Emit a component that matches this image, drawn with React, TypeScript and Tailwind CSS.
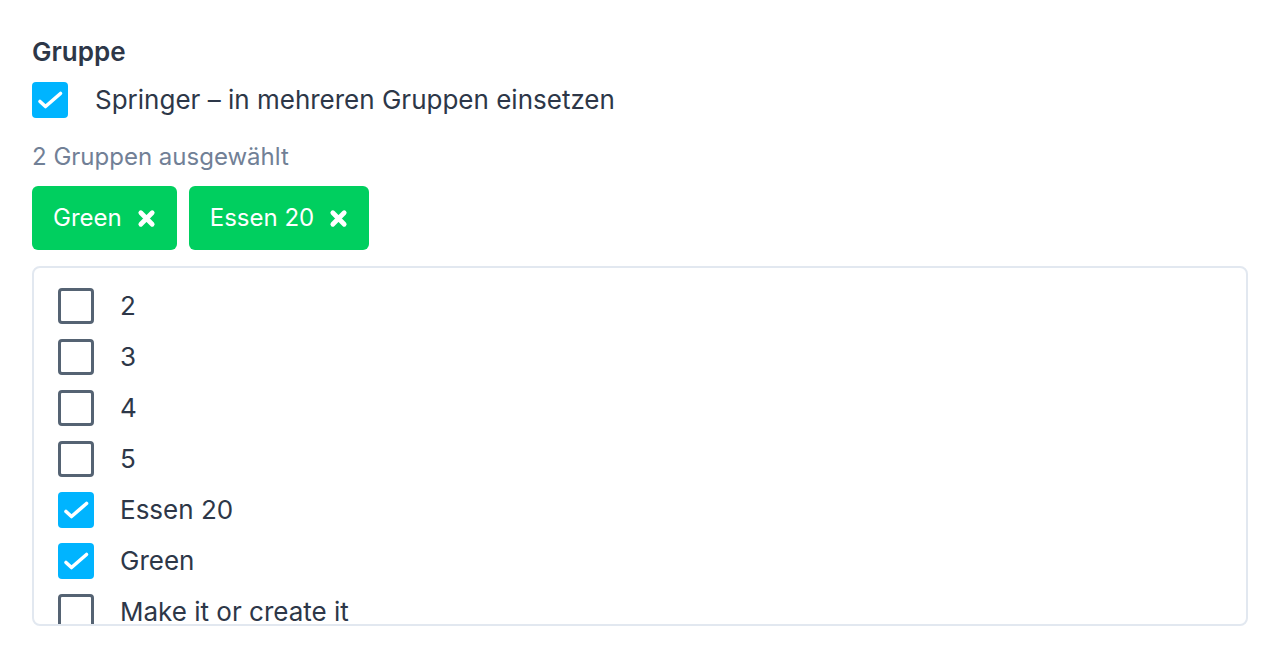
const groups = [
  { name: "2", checked: false },
  { name: "3", checked: false },
  { name: "4", checked: false },
  { name: "5", checked: false },
  { name: "Essen 20", checked: true },
  { name: "Green", checked: true },
  { name: "Make it or create it", checked: false },
  { name: "Nord", checked: false },
];

function Check({ checked }: { checked: boolean }) {
  if (checked) {
    return (
      <span className="h-9 w-9 shrink-0 rounded-[4px] bg-[#00b4ff]">
        <svg viewBox="0 0 36 36" className="h-9 w-9" fill="none" stroke="white" strokeWidth="3.6" strokeLinecap="round" strokeLinejoin="round">
          <path d="M8 19.5l5.5 5L28.5 11.5" />
        </svg>
      </span>
    );
  }
  return <span className="h-9 w-9 shrink-0 rounded-[4px] border-[3px] border-[#556373]" />;
}

function Tag({ label }: { label: string }) {
  return (
    <span className="flex h-16 items-center gap-[15px] rounded-[6px] bg-[#00cf5f] pl-[21px] pr-[21px] text-[24px] text-white">
      {label}
      <svg viewBox="0 0 20 20" className="h-[19px] w-[19px]" fill="none" stroke="white" strokeWidth="5" strokeLinecap="round">
        <path d="M4 4l12 12M16 4L4 16" />
      </svg>
    </span>
  );
}

export default function App() {
  return (
    <div className="min-h-screen bg-white px-8 pt-[36px] font-['Inter',sans-serif] text-[#2d3748]">
      {/* Label */}
      <h2 className="text-[26px] font-semibold leading-[32px]">Gruppe</h2>

      {/* Springer toggle */}
      <label className="mt-[12px] flex items-center gap-[27px]">
        <Check checked />
        <span className="text-[26px]">Springer – in mehreren Gruppen einsetzen</span>
      </label>

      <p className="mt-[23px] text-[24px] leading-[30px] text-[#718096]">2 Gruppen ausgewählt</p>

      {/* Selected tags */}
      <div className="mt-[14px] flex gap-3">
        <Tag label="Green" />
        <Tag label="Essen 20" />
      </div>

      {/* Group list */}
      <div className="mt-[16px] h-[360px] overflow-hidden rounded-[8px] border-2 border-[#e2e8f0] pl-6 pt-5">
        {groups.map((g) => (
          <div key={g.name} className="flex h-[51px] items-start gap-[26px]">
            <Check checked={g.checked} />
            <span className="text-[26px] leading-9">{g.name}</span>
          </div>
        ))}
      </div>
    </div>
  );
}
